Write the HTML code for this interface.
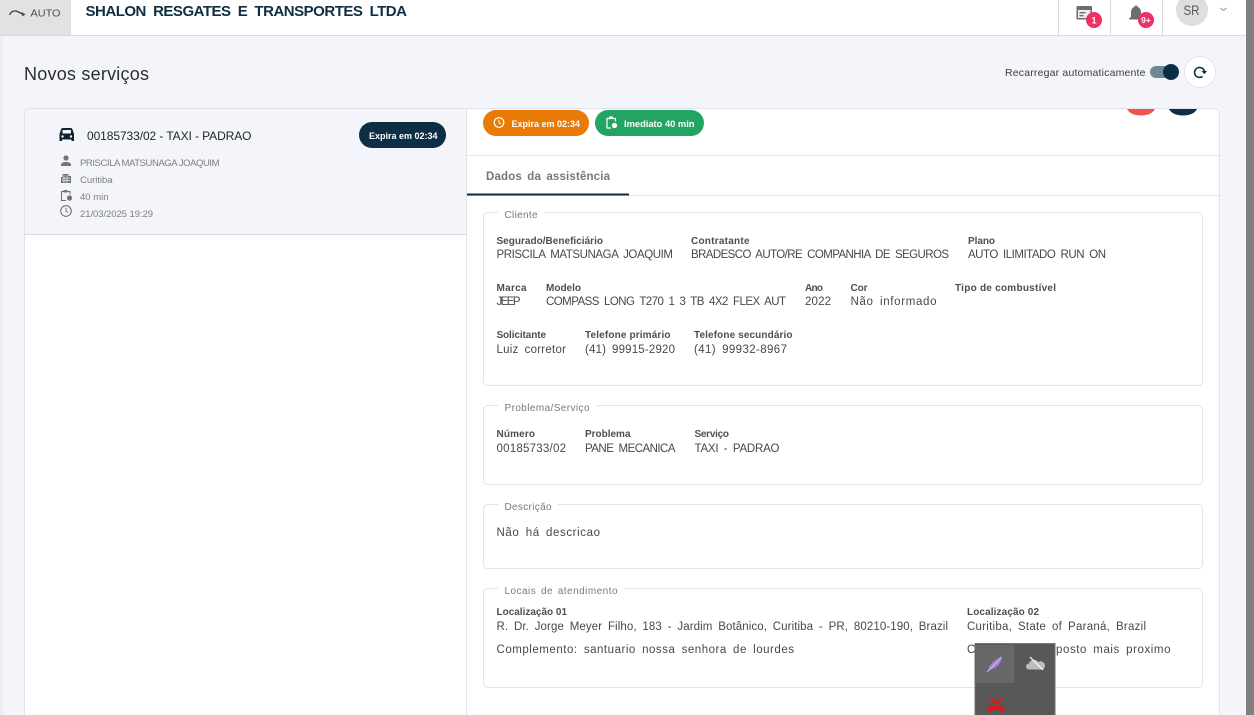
<!DOCTYPE html>
<html lang="pt-BR"><head><meta charset="utf-8"><title>Novos serviços</title>
<style>
html,body{margin:0;padding:0;width:1254px;height:715px;overflow:hidden;background:#f3f5fa}
svg{display:block;position:absolute;left:0;top:0}
text{font-family:"Liberation Sans",sans-serif;fill:#3a3d42;font-size:11.5px}
.l{font-size:10px;fill:#4b4e53;font-weight:bold;stroke:none}
.v{font-size:11.500px;fill:#45484d;word-spacing:2.500px}
.lg{font-size:10px;fill:#777a80;word-spacing:1.500px}
.s{font-size:9.5px;fill:#7b7e84}
.b{stroke:#e2e3e6;fill:#fff;stroke-width:1}
</style></head><body>
<svg width="1254" height="715" viewBox="0 0 1254 715" xmlns="http://www.w3.org/2000/svg">
<rect width="1254" height="715" fill="#f3f5fa"/>
<!-- header -->
<rect x="0" y="0" width="1246" height="35.5" fill="#fff"/>
<rect x="0" y="35" width="1246" height="1" fill="#d9dbe3"/>
<rect x="0" y="0" width="71" height="35" fill="#e2e2e2"/>
<path d="M9.500 15c1.500-3.500 5-5 8-3.500l6 3" fill="none" stroke="#3f4348" stroke-width="1.300"/>
<path d="M21.500 12.500l3 2-2.500 1.500" fill="none" stroke="#3f4348" stroke-width="1"/>
<text x="30.500" y="16.500" textLength="30" lengthAdjust="spacingAndGlyphs" style="font-size:10.500px;fill:#4a4d52">AUTO</text>
<text x="85.500" y="16" textLength="321.500" lengthAdjust="spacing" style="font-size:15px;font-weight:bold;fill:#0e2e42;word-spacing:3.500px">SHALON RESGATES E TRANSPORTES LTDA</text>
<rect x="1058" y="0" width="1" height="35" fill="#d8d8d8"/><rect x="1110" y="0" width="1" height="35" fill="#d8d8d8"/><rect x="1162" y="0" width="1" height="35" fill="#d8d8d8"/>
<!-- calendar icon -->
<rect x="1076.500" y="6" width="15.500" height="13.500" rx="1" fill="#6b6d70"/>
<rect x="1078" y="10" width="12.500" height="8" fill="#eceded"/><rect x="1079.500" y="12" width="6" height="1.400" fill="#6b6d70"/><rect x="1079.500" y="15" width="4" height="1.400" fill="#6b6d70"/>
<circle cx="1094" cy="20" r="8" fill="#f22f63"/>
<text x="1094" y="23.300" text-anchor="middle" style="font-size:9px;font-weight:bold;fill:#fff">1</text>
<!-- bell -->
<path d="M1136 5.500c1 0 1.500.6 1.500 1.400 2.500.8 3.500 3 3.500 5.600v4.500l2 1.500v1h-14v-1l2-1.500v-4.500c0-2.600 1-4.800 3.500-5.600 0-.8.5-1.400 1.500-1.400z" fill="#6b6d70"/>
<circle cx="1146" cy="20" r="8" fill="#f22f63"/>
<text x="1146" y="23" text-anchor="middle" style="font-size:8.500px;font-weight:bold;fill:#fff">9+</text>
<!-- avatar -->
<circle cx="1192" cy="10" r="16" fill="#dedede"/>
<text x="1191.500" y="15" text-anchor="middle" textLength="16" lengthAdjust="spacingAndGlyphs" style="font-size:13.500px;fill:#55585c">SR</text>
<path d="M1220.500 8l3 2.500 3-2.500" fill="none" stroke="#8a8c90" stroke-width="1"/>
<!-- scrollbar strip -->
<rect x="1246" y="0" width="8" height="715" fill="#808080"/>
<rect x="0" y="36" width="3" height="679" fill="#eceef3"/>
<!-- title -->
<text x="24" y="80" textLength="125" lengthAdjust="spacing" style="font-size:18px;fill:#2b2e33">Novos serviços</text>
<text x="1005" y="76" textLength="140.500" lengthAdjust="spacing" style="font-size:10.500px;fill:#3a3d42">Recarregar automaticamente</text>
<rect x="1150" y="66" width="28" height="12" rx="6" fill="#6f8797"/>
<circle cx="1171" cy="72" r="8" fill="#0d2f45"/>
<circle cx="1200" cy="72" r="15.500" fill="#fff" stroke="#e3e5ea"/>
<path d="M1204.500 71a5 5 0 1 0-.6 4.300" fill="none" stroke="#0d2f45" stroke-width="1.600" transform="rotate(20 1200 72)"/>
<path d="M1201.500 71h5.500l-2.700 3.200z" fill="#0d2f45"/>
<!-- main card -->
<path d="M24.500 725V114a5.500 5.500 0 0 1 5.500-5.500H1214a5.500 5.500 0 0 1 5.500 5.500V725z" fill="#fff" stroke="#dfe2ea"/>
<path d="M25 115a6 6 0 0 1 6-6H466V234H25z" fill="#f3f5fa"/>
<rect x="25" y="234" width="441" height="1" fill="#d9d9dc"/>
<rect x="466" y="109" width="1" height="606" fill="#e2e3e6"/>
<!-- clipped circles -->
<path d="M1127 109h28c-2 4-7 6.500-14 6.500s-12-2.500-14-6.500z" fill="#ef5350"/>
<path d="M1169 109h28c-2 4-7 6.500-14 6.500s-12-2.500-14-6.500z" fill="#0d2f45"/>
<!-- list item -->
<path d="M61 129.500c.3-1 1-1.500 2-1.500h7.500c1 0 1.700.5 2 1.500l1.500 4.500v7h-2.500v-1.500h-9.500v1.500H59.500v-7z" fill="#10202e"/>
<rect x="62.500" y="130" width="8.500" height="3.500" fill="#f3f5fa"/><circle cx="62.500" cy="136.500" r="1.200" fill="#f3f5fa"/><circle cx="71" cy="136.500" r="1.200" fill="#f3f5fa"/>
<text x="87" y="140" textLength="164.500" lengthAdjust="spacing" style="font-size:12px;fill:#1d2329">00185733/02 - TAXI - PADRAO</text>
<rect x="359" y="122" width="87" height="26" rx="13" fill="#0d2f45"/>
<text x="369" y="139" textLength="68.500" lengthAdjust="spacingAndGlyphs" style="font-size:9.500px;font-weight:bold;fill:#fff">Expira em 02:34</text>
<circle cx="66" cy="158" r="2.600" fill="#707378"/><path d="M61 166v-1.500c0-1.700 3-2.500 5-2.500s5 .8 5 2.500v1.500z" fill="#707378"/>
<text x="80" y="166" textLength="139.500" lengthAdjust="spacing" class="s">PRISCILA MATSUNAGA JOAQUIM</text>
<path d="M61 183v-6h1.500v-3h6v2h2.500v7z" fill="#707378"/>
<path d="M62 178.200h8M62 180.500h8M64 175v8M67 175v8" stroke="#f3f5fa" stroke-width=".7"/>
<text x="80" y="183" textLength="32.500" lengthAdjust="spacing" class="s">Curitiba</text>
<path d="M66 191.500h4v3M66 200.500h-4.500v-9h4" fill="none" stroke="#707378" stroke-width="1.100"/><rect x="63.500" y="190" width="4" height="2.500" fill="#707378"/><circle cx="69.500" cy="198" r="2.600" fill="#707378"/>
<text x="80" y="200" textLength="28.500" lengthAdjust="spacing" class="s">40 min</text>
<circle cx="66" cy="211" r="5.300" fill="none" stroke="#707378" stroke-width="1.100"/><path d="M66 208v3.200l2.200 1.300" fill="none" stroke="#707378" stroke-width="1"/>
<text x="80" y="217" textLength="73" lengthAdjust="spacing" class="s">21/03/2025 19:29</text>
<!-- chips -->
<rect x="483" y="110" width="106" height="26" rx="13" fill="#e87a05"/>
<circle cx="499" cy="122.500" r="4.800" fill="none" stroke="#fff" stroke-width="1.200"/><path d="M499 119.500v3.200l2 1.200" fill="none" stroke="#fff"/>
<text x="511.500" y="127" textLength="68.500" lengthAdjust="spacingAndGlyphs" style="font-size:9.500px;font-weight:bold;fill:#fff">Expira em 02:34</text>
<rect x="595" y="110" width="109" height="26" rx="13" fill="#22a463"/>
<path d="M612 118.500h3.500v3M611 128h-4v-9.500h4" fill="none" stroke="#fff" stroke-width="1.200"/><rect x="609" y="116.500" width="4" height="2.500" fill="#fff"/><circle cx="614.500" cy="125.500" r="2.600" fill="#fff"/>
<text x="624" y="127" textLength="70.500" lengthAdjust="spacingAndGlyphs" style="font-size:9.500px;font-weight:bold;fill:#fff">Imediato 40 min</text>
<rect x="467" y="155" width="753" height="1" fill="#e2e3e6"/>
<!-- tab -->
<text x="486" y="180" textLength="124" lengthAdjust="spacing" style="font-size:11.500px;font-weight:bold;fill:#74777c;word-spacing:2px">Dados da assistência</text>
<rect x="467" y="195" width="753" height="1" fill="#e2e3e6"/>
<rect x="467" y="193.500" width="162" height="2" fill="#0d2f45"/>
<!-- Cliente -->
<rect class="b" x="483.500" y="212.500" width="719" height="173" rx="4"/>
<rect x="498" y="208" width="46" height="9" fill="#fff"/>
<text x="504.500" y="218" textLength="33" lengthAdjust="spacing" class="lg">Cliente</text>
<text x="496.500" y="244" textLength="106.500" lengthAdjust="spacing" class="l">Segurado/Beneficiário</text>
<text x="496.500" y="258" textLength="176.500" lengthAdjust="spacing" class="v">PRISCILA MATSUNAGA JOAQUIM</text>
<text x="691" y="244" textLength="58.500" lengthAdjust="spacing" class="l">Contratante</text>
<text x="691" y="258" textLength="258" lengthAdjust="spacing" class="v">BRADESCO AUTO/RE COMPANHIA DE SEGUROS</text>
<text x="968" y="244" textLength="27" lengthAdjust="spacing" class="l">Plano</text>
<text x="968" y="258" textLength="138" lengthAdjust="spacing" class="v">AUTO ILIMITADO RUN ON</text>
<text x="496.500" y="291" textLength="30" lengthAdjust="spacing" class="l">Marca</text>
<text x="496.500" y="305" textLength="24" lengthAdjust="spacing" class="v">JEEP</text>
<text x="546" y="291" textLength="35" lengthAdjust="spacing" class="l">Modelo</text>
<text x="546" y="305" textLength="240" lengthAdjust="spacing" class="v">COMPASS LONG T270 1 3 TB 4X2 FLEX AUT</text>
<text x="805" y="291" textLength="18" lengthAdjust="spacing" class="l">Ano</text>
<text x="805" y="305" textLength="26" lengthAdjust="spacing" class="v">2022</text>
<text x="850.500" y="291" textLength="17" lengthAdjust="spacing" class="l">Cor</text>
<text x="850.500" y="305" textLength="86" lengthAdjust="spacing" class="v">Não informado</text>
<text x="955" y="291" textLength="101" lengthAdjust="spacing" class="l">Tipo de combustível</text>
<text x="496.500" y="338" textLength="49.500" lengthAdjust="spacing" class="l">Solicitante</text>
<text x="496.500" y="353" textLength="69.500" lengthAdjust="spacing" class="v">Luiz corretor</text>
<text x="585" y="338" textLength="85.500" lengthAdjust="spacing" class="l">Telefone primário</text>
<text x="585" y="353" textLength="90" lengthAdjust="spacing" class="v">(41) 99915-2920</text>
<text x="694" y="338" textLength="98.500" lengthAdjust="spacing" class="l">Telefone secundário</text>
<text x="694" y="353" textLength="93" lengthAdjust="spacing" class="v">(41) 99932-8967</text>
<!-- Problema -->
<rect class="b" x="483.500" y="405.500" width="719" height="79" rx="4"/>
<rect x="498" y="401" width="98" height="9" fill="#fff"/>
<text x="504.500" y="411" textLength="85" lengthAdjust="spacing" class="lg">Problema/Serviço</text>
<text x="496.500" y="437" textLength="38.500" lengthAdjust="spacing" class="l">Número</text>
<text x="496.500" y="452" textLength="69.500" lengthAdjust="spacing" class="v">00185733/02</text>
<text x="585" y="437" textLength="45.500" lengthAdjust="spacing" class="l">Problema</text>
<text x="585" y="452" textLength="90.500" lengthAdjust="spacing" class="v">PANE MECANICA</text>
<text x="694.500" y="437" textLength="34.500" lengthAdjust="spacing" class="l">Serviço</text>
<text x="694.500" y="452" textLength="85" lengthAdjust="spacing" class="v">TAXI - PADRAO</text>
<!-- Descricao -->
<rect class="b" x="483.500" y="504.500" width="719" height="64" rx="4"/>
<rect x="498" y="500" width="60" height="9" fill="#fff"/>
<text x="504.500" y="510" textLength="47" lengthAdjust="spacing" class="lg">Descrição</text>
<text x="496.500" y="536" textLength="103.500" lengthAdjust="spacing" class="v">Não há descricao</text>
<!-- Locais -->
<rect class="b" x="483.500" y="588.500" width="719" height="99" rx="4"/>
<rect x="498" y="584" width="126" height="9" fill="#fff"/>
<text x="504.500" y="594" textLength="113" lengthAdjust="spacing" class="lg">Locais de atendimento</text>
<text x="496.500" y="615" textLength="70.500" lengthAdjust="spacing" class="l">Localização 01</text>
<text x="496.500" y="630" textLength="451.500" lengthAdjust="spacing" class="v">R. Dr. Jorge Meyer Filho, 183 - Jardim Botânico, Curitiba - PR, 80210-190, Brazil</text>
<text x="496.500" y="653" textLength="297.500" lengthAdjust="spacing" class="v">Complemento: santuario nossa senhora de lourdes</text>
<text x="967" y="615" textLength="72" lengthAdjust="spacing" class="l">Localização 02</text>
<text x="967" y="630" textLength="179" lengthAdjust="spacing" class="v">Curitiba, State of Paraná, Brazil</text>
<text x="967" y="653" textLength="10" lengthAdjust="spacing" class="v">C</text>
<text x="1056" y="653" textLength="114.500" lengthAdjust="spacing" class="v">posto mais proximo</text>
<!-- floating toolbar -->
<rect x="974.500" y="643" width="81" height="72" fill="#585858"/>
<rect x="974.500" y="643" width="81" height="1" fill="#777"/><rect x="974.500" y="643" width="1" height="72" fill="#6f6f6f"/><rect x="1054.500" y="643" width="1" height="72" fill="#6f6f6f"/>
<rect x="976" y="645" width="38" height="38" fill="#686868"/>
<path d="M988 670c1.500-6 7-10.500 14-14 0 6-4.500 12-11 13.500z" fill="#a67fd6"/><path d="M987 672l14-14" stroke="#e1d2f3" stroke-width=".8"/>
<path d="M1029 669.500a3 3 0 0 1 0-6 5 5 0 0 1 9-1.500 4 4 0 0 1 5 7.500z" fill="#bdbdbd"/>
<path d="M1030 657l13 13" stroke="#fff" stroke-width="1.200"/>
<path d="M989 697l7 6 7-6M989 703l7-6" fill="none" stroke="#e0171e" stroke-width="0"/>
<path d="M989.500 697.500l6.500 5.500 6.500-5.500" fill="none" stroke="#e0171e" stroke-width="2.200"/>
<path d="M987.500 712v-3.500c1-2.500 5-3.500 8.500-3.500s7.500 1 8.500 3.500v3.500h-5l-.5-3h-6l-.5 3z" fill="#e0171e"/>
</svg>
</body></html>
